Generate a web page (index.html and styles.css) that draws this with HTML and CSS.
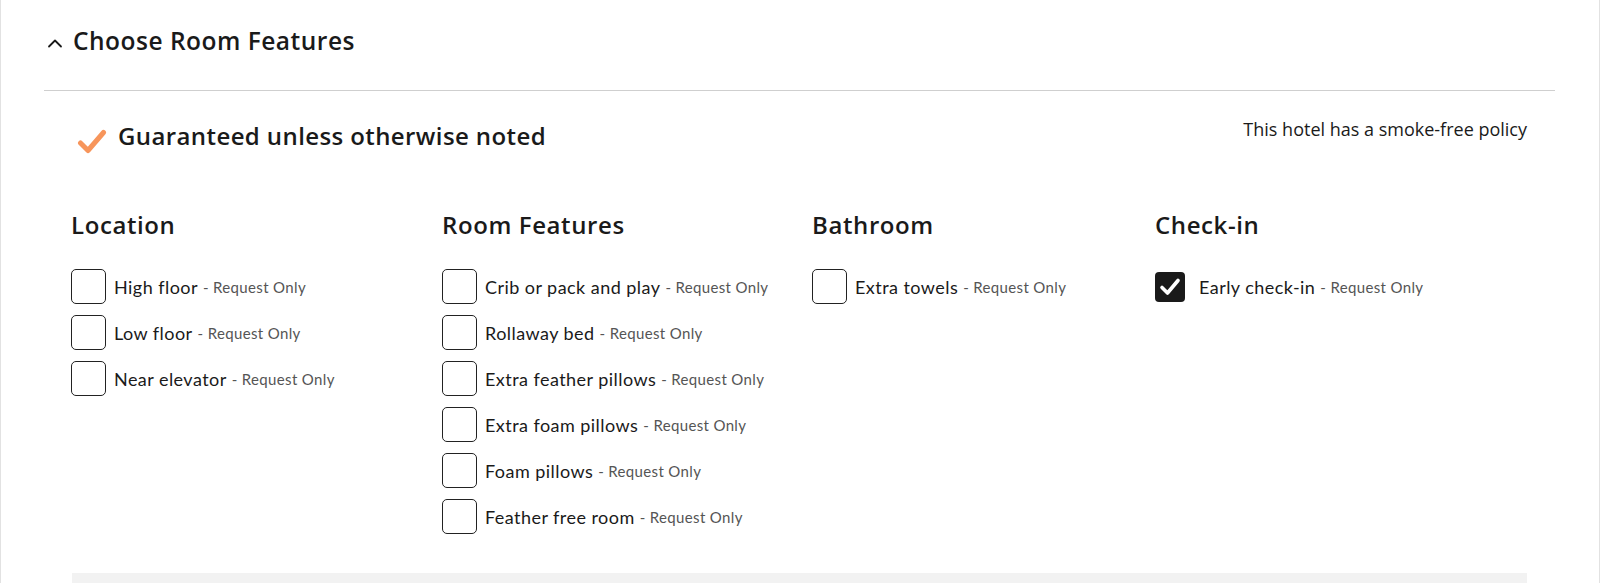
FILE: index.html
```html
<!DOCTYPE html>
<html lang="en">
<head>
<meta charset="utf-8">
<title>Choose Room Features</title>
<link rel="stylesheet" href="styles.css">
</head>
<body>
<div class="panel">
  <div class="panel-header">
    <svg class="chevron" width="16" height="10" viewBox="0 0 16 10"><polyline points="2,8.5 8,2.5 14,8.5" fill="none" stroke="#1a1a1a" stroke-width="1.8" stroke-linecap="round" stroke-linejoin="round"/></svg>
    <h2 class="panel-title">Choose Room Features</h2>
  </div>
  <hr class="rule">
  <div class="panel-body">
    <div class="notice-row">
      <div class="guarantee">
        <svg class="orange-check" width="30" height="25" viewBox="0 0 30 25"><polyline points="3.5,14 11,21.5 26.5,3.5" fill="none" stroke="#f7955b" stroke-width="5" stroke-linecap="round" stroke-linejoin="round"/></svg>
        <span>Guaranteed unless otherwise noted</span>
      </div>
      <div class="smoke">This hotel has a smoke-free policy</div>
    </div>

    <div class="columns">
      <div class="col">
        <h3 class="col-title">Location</h3>
        <ul class="options">
          <li class="option"><span class="box"></span><span class="label">High floor</span><span class="note">- Request Only</span></li>
          <li class="option"><span class="box"></span><span class="label">Low floor</span><span class="note">- Request Only</span></li>
          <li class="option"><span class="box"></span><span class="label">Near elevator</span><span class="note">- Request Only</span></li>
        </ul>
      </div>
      <div class="col">
        <h3 class="col-title">Room Features</h3>
        <ul class="options">
          <li class="option"><span class="box"></span><span class="label">Crib or pack and play</span><span class="note">- Request Only</span></li>
          <li class="option"><span class="box"></span><span class="label">Rollaway bed</span><span class="note">- Request Only</span></li>
          <li class="option"><span class="box"></span><span class="label">Extra feather pillows</span><span class="note">- Request Only</span></li>
          <li class="option"><span class="box"></span><span class="label">Extra foam pillows</span><span class="note">- Request Only</span></li>
          <li class="option"><span class="box"></span><span class="label">Foam pillows</span><span class="note">- Request Only</span></li>
          <li class="option"><span class="box"></span><span class="label">Feather free room</span><span class="note">- Request Only</span></li>
        </ul>
      </div>
      <div class="col">
        <h3 class="col-title">Bathroom</h3>
        <ul class="options">
          <li class="option"><span class="box"></span><span class="label">Extra towels</span><span class="note">- Request Only</span></li>
        </ul>
      </div>
      <div class="col">
        <h3 class="col-title">Check-in</h3>
        <ul class="options">
          <li class="option"><span class="box checked"><svg width="30" height="30" viewBox="0 0 30 30"><rect x="0" y="0" width="30" height="30" rx="4" fill="#1a1a1a"/><polyline points="7,15.5 12.5,21 23,8.5" fill="none" stroke="#fff" stroke-width="3.6" stroke-linecap="round" stroke-linejoin="round"/></svg></span><span class="label">Early check-in</span><span class="note">- Request Only</span></li>
        </ul>
      </div>
    </div>

    <div class="footer-bar"></div>
  </div>
</div>
</body>
</html>
```

FILE: styles.css
```css
* { box-sizing: border-box; }

html, body {
  margin: 0;
  padding: 0;
  background: #fff;
}

body {
  font-family: Lato, "Open Sans", Arial, sans-serif;
  color: #1a1a1a;
  height: 583px;
  overflow: hidden;
}

.panel {
  border-left: 1px solid #e2e2e2;
  border-right: 1px solid #e2e2e2;
  height: 583px;
}

.panel-header {
  display: flex;
  align-items: center;
  gap: 10px;
  padding: 23px 0 0 46px;
}

.chevron {
  display: block;
  flex: none;
  margin-top: 4px;
}

.panel-title {
  margin: 0;
  font-family: "Open Sans", Lato, sans-serif;
  font-size: 24.5px;
  letter-spacing: 0.5px;
  line-height: 36px;
  font-weight: 600;
}

.rule {
  margin: 31px 44px 0 43px;
  border: 0;
  border-top: 1px solid #cfcfcf;
  height: 0;
}

.panel-body {
  padding: 0 72px 0 70px;
}

.notice-row {
  display: flex;
  justify-content: space-between;
  align-items: flex-start;
  padding-top: 27px;
}

.guarantee {
  display: flex;
  align-items: center;
  gap: 11px;
  font-family: "Open Sans", Lato, sans-serif;
  font-size: 24px;
  letter-spacing: 0.4px;
  line-height: 30px;
  font-weight: 600;
}

.orange-check {
  display: block;
  margin-left: 6px;
  margin-top: 11px;
}

.smoke {
  font-family: "Open Sans", Lato, sans-serif;
  font-size: 18px;
  line-height: 22px;
  padding-top: 0;
}

.columns {
  display: grid;
  grid-template-columns: 371px 370px 343px 1fr;
  margin-top: 56px;
}

.col-title {
  margin: 0;
  font-family: "Open Sans", Lato, sans-serif;
  font-size: 24px;
  letter-spacing: 0.6px;
  line-height: 30px;
  font-weight: 600;
}

.options {
  list-style: none;
  margin: 29px 0 0;
  padding: 0;
  display: flex;
  flex-direction: column;
  gap: 11px;
}

.option {
  display: flex;
  align-items: center;
  height: 35px;
}

.box {
  flex: none;
  width: 35px;
  height: 35px;
  border: 1px solid #222;
  border-radius: 5px;
  margin-right: 8px;
}

.box.checked {
  border: 0;
  display: flex;
  align-items: center;
  margin-right: 9px;
}

.box.checked svg {
  display: block;
}

.label {
  font-size: 18px;
  letter-spacing: 0.45px;
  line-height: 24px;
}

.note {
  font-size: 15px;
  letter-spacing: 0.35px;
  line-height: 24px;
  color: #555;
  margin-left: 5px;
}

.footer-bar {
  margin-top: 39px;
  margin-left: 1px;
  height: 10px;
  background: #f2f2f2;
}
```
